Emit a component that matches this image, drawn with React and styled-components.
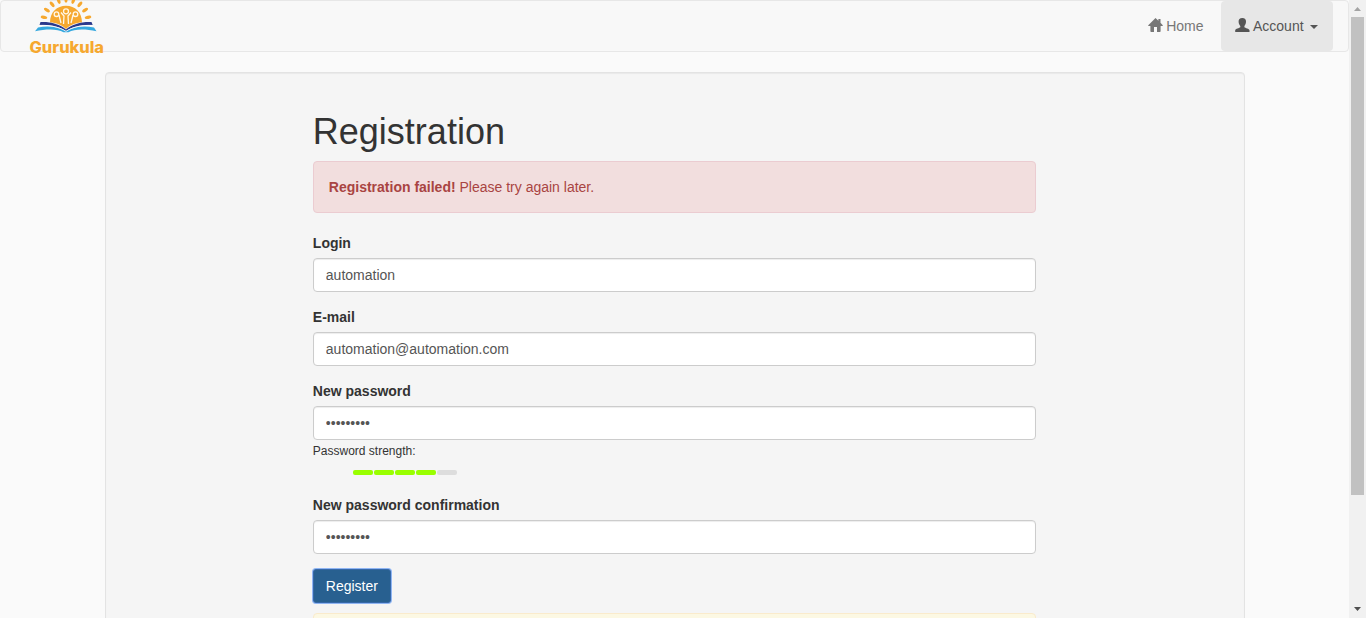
import React from 'react';
import styled, { createGlobalStyle, css } from 'styled-components';

const GlobalStyle = createGlobalStyle`
  *, *::before, *::after { box-sizing: border-box; }
  html, body { margin: 0; height: 100%; overflow: hidden; }
  body {
    background: #fafafa;
    color: #333;
    font: 14px/20px "Liberation Sans", Arial, sans-serif;
  }
`;

const Window = styled.div`
  display: flex;
  height: 100vh;
  overflow: hidden;
`;

const Page = styled.div`
  flex: 1;
  min-width: 0;
  overflow: hidden;
`;

const Navbar = styled.nav`
  display: flex;
  justify-content: space-between;
  height: 52px;
  margin-bottom: 20px;
  padding: 0 15px 0 28px;
  border: 1px solid #e7e7e7;
  border-radius: 4px;
  background: #f8f8f8;
`;

const Brand = styled.a`
  height: 60px;
  margin-top: -1px;
  svg { display: block; overflow: visible; }
`;

const Menu = styled.ul`
  display: flex;
  margin: 0;
  padding: 0;
  list-style: none;
`;

const MenuItem = styled.li`
  display: flex;
  align-items: center;
  height: 50px;
  padding: 0 15px;
  border-radius: 4px;
  color: #777;
  white-space: nowrap;
  svg { flex: none; margin: -2px 3px 0 0; }
  ${(p) => p.$active && css`
    width: 112px;
    margin-left: 2.5px;
    padding: 0 14px;
    background: #e7e7e7;
    color: #555;
  `}
`;

const Caret = styled.span`
  margin: 1px 0 0 6px;
  border-top: 4px solid currentColor;
  border-left: 4px solid transparent;
  border-right: 4px solid transparent;
`;

const Well = styled.main`
  width: 1140px;
  height: 640px;
  margin: 0 auto;
  padding: 19px;
  border: 1px solid #e3e3e3;
  border-radius: 4px;
  background: #f5f5f5;
  box-shadow: inset 0 1px 1px rgba(0, 0, 0, 0.05);
`;

const Column = styled.div`
  width: 723.33px;
  margin: 0 auto;
`;

const Title = styled.h1`
  margin: 20px 0 9.5px;
  font-size: 36px;
  font-weight: 500;
  line-height: 39.5px;
`;

const Alert = styled.div`
  margin-bottom: 20px;
  padding: 15px;
  border: 1px solid ${(p) => (p.$warning ? '#faebcc' : '#ebccd1')};
  border-radius: 4px;
  background: ${(p) => (p.$warning ? '#fcf8e3' : '#f2dede')};
  color: ${(p) => (p.$warning ? '#8a6d3b' : '#a94442')};
`;

const Field = styled.div`
  margin-bottom: 15px;
`;

const Label = styled.label`
  display: block;
  margin-bottom: 5px;
  font-weight: 700;
`;

const Input = styled.input`
  display: block;
  width: 100%;
  height: 34px;
  padding: 6px 12px;
  border: 1px solid #ccc;
  border-radius: 4px;
  background: #fff;
  box-shadow: inset 0 1px 1px rgba(0, 0, 0, 0.075);
  color: #555;
  font: inherit;
  outline: none;
`;

const Strength = styled.div`
  height: 40px;
  padding-top: 3px;
  font-size: 12px;
  line-height: 17px;
`;

const Meter = styled.div`
  display: flex;
  gap: 1px;
  margin: 10px 0 0 40px;
`;

const Segment = styled.span`
  width: 20px;
  height: 5px;
  border-radius: 2px;
  background: ${(p) => (p.$on ? '#9f0' : '#ddd')};
`;

const Button = styled.button`
  display: block;
  height: 34px;
  margin-bottom: 10px;
  padding: 6px 12px;
  border: 1px solid #3668a8;
  border-radius: 3px;
  background: #286090;
  color: #fff;
  font: inherit;
  outline: none;
  box-shadow: 0 0 0 1px #8fb5f3;
`;

const Scrollbar = styled.div`
  display: flex;
  flex: none;
  flex-direction: column;
  align-items: center;
  width: 17px;
  background: #f1f1f1;
`;

const ScrollButton = styled.div`
  display: flex;
  align-items: center;
  justify-content: center;
  width: 17px;
  height: 17px;
  padding-bottom: ${(p) => (p.$down ? '2px' : '0')};
  margin-top: ${(p) => (p.$down ? 'auto' : '0')};
`;

const Thumb = styled.div`
  width: 13px;
  height: 478px;
  background: #c1c1c1;
`;

function Logo() {
  const rays = [-78, -58, -38, -19, 0, 19, 38, 58, 78];
  return (
    <svg width="76" height="60" viewBox="29 0 76 60">
      <g fill="#f6a82f">
        {rays.map((a) => (
          <ellipse key={a} cx="66" cy="-.5" rx="1.6" ry="3.3" transform={`rotate(${a} 66 22)`} />
        ))}
        <path d="M50 22.5C50 12 57 5.8 66 5.8S82 12 82 22.5C76 22.5 70 25 66 29C62 25 56 22.5 50 22.5Z" />
      </g>
      <g fill="none" stroke="#fff7e8" strokeWidth="1.3">
        <circle cx="66" cy="11.3" r="2.5" fill="#f6a82f" />
        <circle cx="56.5" cy="14.2" r="2.3" fill="#f6a82f" />
        <circle cx="75.5" cy="14.2" r="2.3" fill="#f6a82f" />
        <path d="M61 12.5L64 16L63.5 24M71 12.5L68 16L68.5 24M59 15L61 23M73 15L71 23" />
      </g>
      <path d="M40.5 22C50 21.5 60 24 66 29.5C72 24 82 21.5 91.5 22L92.7 25C82 24.5 73 26 66 31C59 26 50 24.5 39.5 25Z" fill="#2b398c" />
      <path d="M38 27.5C49 25 59 27 66 31C73 27 83 25 94 27.5L96.5 31.2C85 28.8 74 29 68.5 32.2H63.5C58 29 47 28.8 35 31.2Z" fill="#35a8df" />
      <path d="M39.5 25.4C50 25 59 26.8 66 31.4C73 26.8 82 25 92.7 25.4" fill="none" stroke="#fff" strokeWidth=".7" />
      <text x="29.5" y="52.5" textLength="74.5" lengthAdjust="spacingAndGlyphs" fill="#f6a82f" fontFamily="Inter, sans-serif" fontSize="15.5" fontWeight="800">Gurukula</text>
    </svg>
  );
}

function HomeIcon() {
  return (
    <svg width="15" height="14" viewBox="0 0 15 14" fill="currentColor">
      <path d="M7.5 0L10.4 2.8V1H12.5V4.8L15 7.4L14.3 8H12.6V13.2Q12.6 14 11.8 14H9V9H6V14H3.2Q2.4 14 2.4 13.2V8H.7L0 7.4Z" />
    </svg>
  );
}

function UserIcon() {
  return (
    <svg width="15" height="14" viewBox="0 0 15 14" fill="currentColor">
      <path d="M7.3 0C9.8 0 11.2 1.5 11 3.8C10.9 6 10.1 7.1 9.4 8V9.2C10.2 10 14.3 10.6 14.5 12.2V14H.2V12.2C.4 10.6 4.5 10 5.3 9.2V8C4.5 7.1 3.7 6 3.6 3.8C3.4 1.5 4.8 0 7.3 0Z" />
    </svg>
  );
}

export default function App() {
  return (
    <>
      <GlobalStyle />
      <Window>
        <Page>
          <Navbar>
            <Brand><Logo /></Brand>
            <Menu>
              <MenuItem><HomeIcon />Home</MenuItem>
              <MenuItem $active><UserIcon />Account<Caret /></MenuItem>
            </Menu>
          </Navbar>
          <Well>
            <Column>
              <Title>Registration</Title>
              <Alert><strong>Registration failed!</strong> Please try again later.</Alert>
              <Field>
                <Label>Login</Label>
                <Input defaultValue="automation" />
              </Field>
              <Field>
                <Label>E-mail</Label>
                <Input defaultValue="automation@automation.com" />
              </Field>
              <Field>
                <Label>New password</Label>
                <Input type="password" defaultValue="password1" />
                <Strength>
                  Password strength:
                  <Meter>
                    {[1, 2, 3, 4, 5].map((n) => <Segment key={n} $on={n < 5} />)}
                  </Meter>
                </Strength>
              </Field>
              <Field>
                <Label>New password confirmation</Label>
                <Input type="password" defaultValue="password1" />
              </Field>
              <Button>Register</Button>
              <Alert $warning />
            </Column>
          </Well>
        </Page>
        <Scrollbar>
          <ScrollButton>
            <svg width="7" height="4" viewBox="0 0 7 4"><path d="M0 4L3.5 0L7 4Z" fill="#a3a3a3" /></svg>
          </ScrollButton>
          <Thumb />
          <ScrollButton $down>
            <svg width="7" height="4" viewBox="0 0 7 4"><path d="M0 0H7L3.5 4Z" fill="#505050" /></svg>
          </ScrollButton>
        </Scrollbar>
      </Window>
    </>
  );
}
